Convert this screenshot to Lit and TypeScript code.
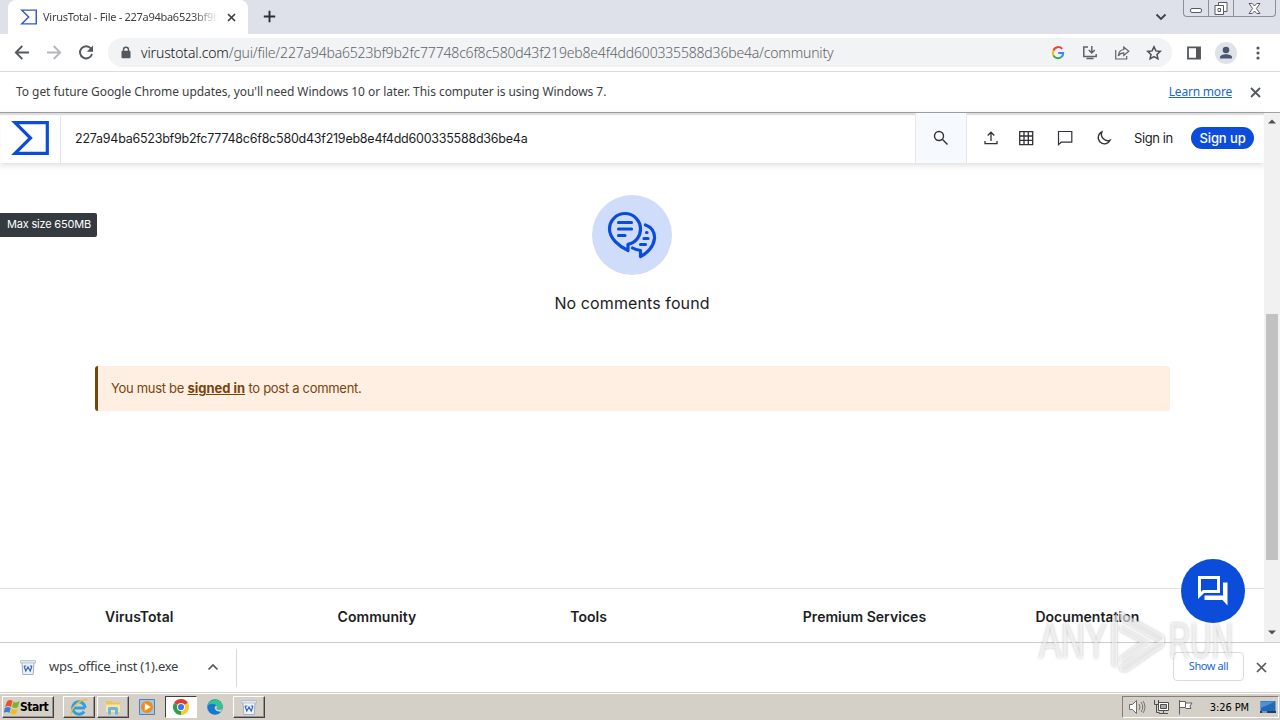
import { LitElement, css, html, svg } from "lit";
import { customElement, property } from "lit/decorators.js";

const HASH = "227a94ba6523bf9b2fc77748c6f8c580d43f219eb8e4f4dd600335588d36be4a";

const sigma = svg`<path fill="none" stroke="currentColor" stroke-width="3.2" stroke-linejoin="miter" d="M4 1.7H36.300V32.300H4L19.500 17Z"/>`;

const wpsIcon = html`
    <svg width="16" height="16" viewBox="0 0 16 16">
        <path d="M2 3.5h12l-.8 12H2.8z" fill="#eef3fa" stroke="#9fb0c6"/>
        <path d="M0.5 1.5h15v2.5h-15z" fill="#dfe6f0" stroke="#a9b5c6" stroke-width=".7"/>
        <path d="M4 7l1.8 5L8 8l2.2 4L12 7M4 7h2.4M12 7h-2.2" fill="none" stroke="#3566c0" stroke-width="1.2"/>
    </svg>`;

@customElement("browser-chrome")
class BrowserChrome extends LitElement {
    static styles = css`
        :host {
            display: block;
            font-family: "Noto Sans", "Open Sans", sans-serif;
            color: #3c4043;
        }
        .strip {
            display: flex;
            height: 34px;
            background: #dee1e9;
        }
        .tab {
            display: flex;
            align-items: center;
            box-sizing: border-box;
            width: 240px;
            height: 34px;
            margin-left: 8px;
            padding: 0 10px 0 12px;
            background: #fff;
            border-radius: 8px 8px 0 0;
        }
        .favicon {
            flex: none;
            color: #2f55d4;
        }
        .title {
            width: 175px;
            margin: -1px 0 0 6px;
            overflow: hidden;
            white-space: nowrap;
            font-size: 11px;
            letter-spacing: -0.28px;
            mask-image: linear-gradient(90deg, #000 150px, transparent 175px);
        }
        .tab-close {
            margin-left: 9px;
        }
        .new-tab {
            margin: 10px 0 0 15px;
        }
        .search-tabs {
            margin: 12px 16px 0 auto;
        }
        .window {
            display: flex;
            box-sizing: border-box;
            width: 93px;
            height: 17px;
            margin-right: 4px;
            border: 1px solid #8b8f96;
            border-top: none;
            border-radius: 0 0 4px 4px;
        }
        .window span {
            display: flex;
            align-items: center;
            justify-content: center;
            width: 25px;
            border-right: 1px solid #8b8f96;
        }
        .window span:last-child {
            width: 42px;
            border: none;
        }
        .toolbar {
            display: flex;
            align-items: center;
            box-sizing: border-box;
            height: 38px;
            padding: 0 13px 0 14px;
            background: #fff;
            border-bottom: 1px solid #d9dbde;
        }
        .nav {
            display: flex;
            gap: 16px;
        }
        .omnibox {
            display: flex;
            align-items: center;
            box-sizing: border-box;
            width: 1064px;
            height: 29px;
            margin-left: 14px;
            padding: 0 10px 0 12px;
            background: #f1f3f4;
            border-radius: 15px;
        }
        .url {
            margin-left: 9px;
            font-size: 14px;
            font-weight: 300;
            white-space: nowrap;
            letter-spacing: -0.18px;
            color: #5f6368;
        }
        .url b {
            font-weight: 350;
            color: #111214;
            letter-spacing: -0.14px;
        }
        .actions {
            display: flex;
            gap: 16px;
            margin-left: auto;
        }
        .side {
            display: flex;
            align-items: center;
            gap: 13px;
            margin-left: 14px;
        }
        .side svg:last-child {
            margin-left: 1px;
        }
        .infobar {
            display: flex;
            align-items: center;
            height: 40px;
            padding: 0 19px 0 16px;
            background: #fff;
            font-size: 12px;
            white-space: nowrap;
        }
        .infobar .message {
            margin-top: -2px;
            letter-spacing: -0.05px;
        }
        .infobar a {
            margin: -2px 18px 0 auto;
            color: #1967d2;
            letter-spacing: -0.2px;
            text-decoration: underline;
        }
    `

    render() {
        return html`
        <div class="strip">
            <div class="tab">
                <svg class="favicon" width="17" height="16" viewBox="0 0 38 34">${sigma}</svg>
                <span class="title">VirusTotal - File - 227a94ba6523bf9b</span>
                <svg class="tab-close" width="9" height="9" viewBox="0 0 9 9"><path d="M1 1l7 7M8 1L1 8" stroke="#3c4043" stroke-width="1.7"/></svg>
            </div>
            <svg class="new-tab" width="13" height="13" viewBox="0 0 13 13"><path d="M6.5 .8v11.4M.8 6.500h11.400" stroke="#2b2e33" stroke-width="1.9"/></svg>
            <svg class="search-tabs" width="12" height="10" viewBox="0 0 12 10"><path d="M1.500 2.500L6 7l4.500-4.500" fill="none" stroke="#3c4043" stroke-width="1.8"/></svg>
            <div class="window">
                <span><svg width="14" height="14" viewBox="0 0 14 14"><rect x="1.500" y="7.500" width="11" height="4" rx="1.500" fill="#fff" stroke="#555a63"/></svg></span>
                <span><svg width="14" height="15" viewBox="0 0 14 15"><path d="M4.500 1.500h8.500v9h-8.500z" fill="#fff" stroke="#555a63"/><path d="M1 4.500h8.500v9H1z" fill="#fff" stroke="#555a63"/><path d="M4 7.500h2.500v3H4z" fill="none" stroke="#555a63"/></svg></span>
                <span><svg width="13" height="13" viewBox="0 0 13 13"><path d="M1 1.500h3.200L6.500 4l2.300-2.500H12L8.400 6.500 12 11.500H8.800L6.500 9l-2.300 2.500H1l3.600-5z" fill="#fff" stroke="#555a63"/></svg></span>
            </div>
        </div>
        <div class="toolbar">
            <div class="nav">
                <svg width="16" height="16" viewBox="0 0 16 16"><path d="M15 7.500H2M8.300 1L1.800 7.500l6.500 6.500" fill="none" stroke="#54585d" stroke-width="1.800"/></svg>
                <svg width="16" height="16" viewBox="0 0 16 16"><path d="M1 7.500h13M7.700 1L14.200 7.500l-6.500 6.500" fill="none" stroke="#b4b6b9" stroke-width="1.800"/></svg>
                <svg width="16" height="16" viewBox="0 0 16 16"><path d="M12.900 3.500A6.100 6.100 0 1 0 14 9" fill="none" stroke="#54585d" stroke-width="1.900"/><path d="M15 .5v6.200H8.800z" fill="#54585d"/></svg>
            </div>
            <div class="omnibox">
                <svg width="12" height="14" viewBox="0 0 12 14"><rect x="1.500" y="4.800" width="9" height="7.400" rx="1" fill="#54585d"/><path d="M3.500 5.200V3.800a2.500 2.500 0 0 1 5 0v1.400" fill="none" stroke="#54585d" stroke-width="1.400"/></svg>
                <span class="url"><b>virustotal.com</b>/gui/file/${HASH}/community</span>
                <div class="actions">
                    <svg width="16" height="16" viewBox="0 0 16 16">
                        <path d="M12.200 3.900A5.200 5.200 0 0 0 3.400 5.600" fill="none" stroke="#ea4335" stroke-width="2"/>
                        <path d="M3.400 5.600a5.200 5.200 0 0 0 0 4.800" fill="none" stroke="#fbbc05" stroke-width="2"/>
                        <path d="M3.400 10.400a5.200 5.200 0 0 0 8 1.600" fill="none" stroke="#34a853" stroke-width="2"/>
                        <path d="M11.400 12A5.200 5.200 0 0 0 13.200 8H8.200" fill="none" stroke="#4285f4" stroke-width="2"/>
                    </svg>
                    <svg width="16" height="16" viewBox="0 0 16 16" fill="none" stroke="#5f6368" stroke-width="1.500"><path d="M6 2H1.800v9.500h12.400V9M9.800 1v6.500M6.800 5l3 3 3-3M4.500 13.500h7"/></svg>
                    <svg width="16" height="16" viewBox="0 0 16 16" fill="none" stroke="#5f6368" stroke-width="1.200"><path d="M1.700 5v9h11v-3M9.800 2v2.500C6.300 5 4.600 7.200 4.300 10.800c1.300-2 3-3 5.500-3v2.700l5-4.300z"/></svg>
                    <svg width="16" height="16" viewBox="0 0 16 16" fill="none" stroke="#4b4f54" stroke-width="1.500"><path d="M8 1.800l1.900 4.100 4.400.5-3.300 3 .9 4.400L8 11.600l-3.900 2.200.9-4.400-3.300-3 4.400-.5z"/></svg>
                </div>
            </div>
            <div class="side">
                <svg width="16" height="16" viewBox="0 0 16 16"><path d="M2 2.300h12v11.400H2z" fill="none" stroke="#54585d" stroke-width="1.800"/><path d="M10 2h4.500v12H10z" fill="#54585d"/></svg>
                <svg width="22" height="22" viewBox="0 0 22 22"><circle cx="11" cy="11" r="11" fill="#dfe2e8"/><circle cx="11" cy="8" r="3.300" fill="#4a5672"/><path d="M5 16.500v-1.300c0-4 12-4 12 0v1.300z" fill="#4a5672"/></svg>
                <svg width="16" height="16" viewBox="0 0 16 16" fill="#54585d"><circle cx="7" cy="3" r="1.600"/><circle cx="7" cy="8" r="1.600"/><circle cx="7" cy="13" r="1.600"/></svg>
            </div>
        </div>
        <div class="infobar">
            <span class="message">To get future Google Chrome updates, you'll need Windows 10 or later. This computer is using Windows 7.</span>
            <a>Learn more</a>
            <svg width="11" height="11" viewBox="0 0 11 11"><path d="M1 1l9 9M10 1l-9 9" stroke="#54585d" stroke-width="1.800"/></svg>
        </div>
        `
    }
}

@customElement("vt-page")
class VtPage extends LitElement {
    static styles = css`
        :host {
            display: flex;
            position: relative;
            height: 530px;
            box-sizing: border-box;
            border-top: 1px solid #a2a2a4;
            font-family: Inter, Roboto, sans-serif;
            color: #1c1d1f;
            background: #fff;
        }
        .content {
            display: flex;
            flex-direction: column;
            width: 1264px;
        }
        header {
            display: flex;
            align-items: stretch;
            height: 50px;
            box-shadow: inset 0 2px 1px #dcdcde, 0 2px 6px rgba(0, 0, 0, 0.14);
        }
        .logo {
            display: flex;
            align-items: center;
            box-sizing: border-box;
            width: 61px;
            padding-left: 11px;
            border-right: 1px solid #e3e6ee;
            color: #0b4dda;
        }
        .query {
            display: flex;
            align-items: center;
            width: 840px;
            padding-left: 14px;
            font-size: 12.5px;
            letter-spacing: -0.24px;
        }
        .search {
            display: flex;
            align-items: center;
            justify-content: center;
            box-sizing: border-box;
            width: 52px;
            background: #f6f9fd;
            border: 1px solid #e3e6ee;
            border-width: 0 1px;
        }
        .menu {
            display: flex;
            align-items: center;
            flex: 1;
            padding: 0 10px 0 16px;
            font-size: 13px;
        }
        .menu svg {
            margin-right: 19px;
        }
        .menu .wide {
            margin-right: 22px;
        }
        .sign-in {
            margin-left: 3px;
            letter-spacing: -0.4px;
        }
        .sign-up {
            width: 63px;
            margin-left: auto;
            line-height: 22px;
            border-radius: 11px;
            text-align: center;
            color: #fff;
            background: #0b4dda;
            font-weight: 500;
            letter-spacing: -0.1px;
        }
        .tooltip {
            position: absolute;
            left: 0;
            top: 100px;
            width: 97px;
            box-sizing: border-box;
            padding-left: 7px;
            line-height: 23px;
            height: 24px;
            border-radius: 0 2px 2px 0;
            color: #fff;
            background: #343a40;
            font-size: 11px;
            letter-spacing: -0.2px;
            white-space: nowrap;
        }
        .empty {
            display: flex;
            flex-direction: column;
            align-items: center;
            margin-top: 32px;
        }
        .empty p {
            margin: 16px 0 0;
            font-size: 16px;
            line-height: 24px;
            letter-spacing: 0.1px;
        }
        .alert {
            box-sizing: border-box;
            width: 1075px;
            margin: 51px 0 0 95px;
            padding-left: 13px;
            line-height: 45px;
            border-left: 3px solid #7a430c;
            border-radius: 3px;
            background: #ffefe3;
            color: #7a430c;
            font-size: 13px;
            letter-spacing: -0.3px;
        }
        .alert a {
            font-weight: 700;
            letter-spacing: 0;
            text-decoration: underline;
        }
        footer {
            display: grid;
            grid-template-columns: repeat(5, 232.6px);
            box-sizing: border-box;
            height: 54px;
            margin-top: auto;
            padding-left: 105px;
            border-top: 1px solid #dfe1e5;
            line-height: 56px;
            font-size: 14px;
            font-weight: 600;
            letter-spacing: 0.04px;
        }
        .chat {
            position: absolute;
            left: 1181px;
            top: 446px;
            display: flex;
            align-items: center;
            justify-content: center;
            width: 64px;
            height: 64px;
            border-radius: 50%;
            background: #0b4dda;
        }
        .scrollbar {
            display: flex;
            flex-direction: column;
            align-items: center;
            width: 16px;
            background: #f1f1f1;
            padding: 6px 0 7px;
            box-sizing: border-box;
        }
        .scrollbar svg {
            flex: none;
        }
        .thumb {
            width: 12px;
            height: 246px;
            margin: 190px 0 auto;
            background: #c1c1c1;
        }
    `

    render() {
        return html`
        <div class="content">
            <header>
                <div class="logo"><svg width="38" height="34" viewBox="0 0 38 34">${sigma}</svg></div>
                <div class="query"><span>${HASH}</span></div>
                <div class="search"><svg width="16" height="16" viewBox="0 0 16 16" fill="none" stroke="#303236" stroke-width="1.400"><circle cx="6" cy="6" r="4.500"/><path d="M9.300 9.300l5.200 5.200"/></svg></div>
                <div class="menu">
                    <svg width="16" height="16" viewBox="0 0 16 16" fill="none" stroke="#303236" stroke-width="1.300"><path d="M8 11V2.500M4.700 5.500L8 2.200l3.300 3.300M2 11v2.700h12V11"/></svg>
                    <svg class="wide" width="16" height="16" viewBox="0 0 16 16" fill="none" stroke="#303236" stroke-width="1.300"><path d="M1.700 1.700h13v13h-13zM1.700 6h13M1.700 10.300h13M6 1.700v13M10.300 1.700v13"/></svg>
                    <svg class="wide" width="18" height="18" viewBox="0 0 18 18" fill="none" stroke="#303236" stroke-width="1.200"><path d="M2.500 2.500h13.300v10.700H5.200l-2.700 2.500z"/></svg>
                    <svg width="16" height="16" viewBox="0 0 16 16" fill="none" stroke="#303236" stroke-width="1.300"><path d="M6 1.800a6.300 6.300 0 1 0 8.300 8.300A6.300 6.300 0 0 1 6 1.800z"/></svg>
                    <span class="sign-in">Sign in</span>
                    <span class="sign-up">Sign up</span>
                </div>
            </header>
            <div class="empty">
                <svg width="80" height="80" viewBox="0 0 80 80">
                    <circle cx="40" cy="40" r="40" fill="#cfdcfa"/>
                    <g fill="none" stroke="#0b4dda" stroke-width="3.200" stroke-linejoin="round" stroke-linecap="round">
                        <path d="M36 55.500V49.300C44 48 48.500 41 48.500 34A15.500 15.500 0 0 0 17.500 34C17.500 43 27 51.500 36 55.500z"/>
                        <path d="M53.500 30C59.500 32 63 37 62.500 43.500 61.500 52 55 58.500 48.500 61.500V55.500C45.500 55 42.500 54.200 40.500 53"/>
                        <path d="M26.500 27.500H39.500M26.500 34H39.500M26.500 40.500H33M54.500 37.500h.5M52 43.500h4M48.500 49.500h5"/>
                    </g>
                </svg>
                <p>No comments found</p>
            </div>
            <div class="alert">You must be <a>signed in</a> to post a comment.</div>
            <footer>
                <span>VirusTotal</span>
                <span>Community</span>
                <span>Tools</span>
                <span>Premium Services</span>
                <span>Documentation</span>
            </footer>
        </div>
        <div class="scrollbar">
            <svg width="8" height="5" viewBox="0 0 8 5"><path d="M0 4.500L4 .5l4 4z" fill="#505050"/></svg>
            <div class="thumb"></div>
            <svg width="8" height="5" viewBox="0 0 8 5"><path d="M0 .5l4 4 4-4z" fill="#505050"/></svg>
        </div>
        <div class="tooltip">Max size 650MB</div>
        <div class="chat">
            <svg width="32" height="32" viewBox="0 0 32 32"><path d="M2.500 2.500h19v14h-15l-4 4z" fill="none" stroke="#fff" stroke-width="3"/><path d="M26 7.500h4.500v23l-5-5.500H7.500v-4.500H26z" fill="#fff"/></svg>
        </div>
        `
    }
}

@customElement("download-shelf")
class DownloadShelf extends LitElement {
    static styles = css`
        :host {
            display: flex;
            align-items: center;
            box-sizing: border-box;
            height: 50px;
            padding: 0 13px 0 20px;
            border-top: 1px solid #c9ccd1;
            background: #fff;
            font-family: "Noto Sans", "Open Sans", sans-serif;
            color: #3c4043;
        }
        .item {
            display: flex;
            align-items: center;
            box-sizing: border-box;
            width: 217px;
            height: 38px;
            padding: 0 17px 2px 0;
            border-right: 1px solid #d5d7da;
        }
        .name {
            margin: -2px 0 0 13px;
            font-size: 13px;
            letter-spacing: -0.26px;
            white-space: nowrap;
        }
        .item .caret {
            margin-left: auto;
        }
        .show-all {
            box-sizing: border-box;
            width: 71px;
            height: 29px;
            margin: -2px 12px 0 auto;
            line-height: 26px;
            border: 1px solid #d9dbde;
            border-radius: 4px;
            text-align: center;
            font-size: 11px;
            letter-spacing: -0.4px;
            color: #1967d2;
        }
        .close {
            margin-bottom: 1px;
        }
    `

    render() {
        return html`
        <div class="item">
            ${wpsIcon}
            <span class="name">wps_office_inst (1).exe</span>
            <svg class="caret" width="12" height="8" viewBox="0 0 12 8"><path d="M1.500 6.500L6 2l4.500 4.500" fill="none" stroke="#54585d" stroke-width="1.700"/></svg>
        </div>
        <span class="show-all">Show all</span>
        <svg class="close" width="11" height="11" viewBox="0 0 11 11"><path d="M1 1l9 9M10 1l-9 9" stroke="#54585d" stroke-width="1.700"/></svg>
        `
    }
}

@customElement("task-button")
class TaskButton extends LitElement {
    @property() look = "raised";

    static styles = css`
        .button {
            display: flex;
            align-items: center;
            justify-content: center;
            box-sizing: border-box;
            width: 32px;
            height: 22px;
        }
        .raised {
            border: 1px solid;
            border-color: #fff #404040 #404040 #fff;
            box-shadow: inset -1px -1px #98948c;
        }
        .pressed {
            border: 1px solid;
            border-color: #404040 #fff #fff #404040;
            background: #fdfdfc;
        }
    `

    render() {
        return html`<div class="button ${this.look}"><slot></slot></div>`
    }
}

@customElement("task-bar")
class TaskBar extends LitElement {
    static styles = css`
        :host {
            display: flex;
            align-items: center;
            box-sizing: border-box;
            height: 28px;
            padding: 2px 1px 0 2px;
            background: #d4d0c8;
            box-shadow: inset 0 1px #d4d0c8, inset 0 2px #fff;
            font-family: "DejaVu Sans Condensed", "DejaVu Sans", sans-serif;
            color: #000;
        }
        .start {
            display: flex;
            align-items: center;
            box-sizing: border-box;
            width: 52px;
            height: 22px;
            padding-left: 1px;
            border: 1px solid;
            border-color: #fff #404040 #404040 #fff;
            box-shadow: inset -1px -1px #98948c;
            font-size: 12px;
            font-weight: 700;
            letter-spacing: -0.5px;
        }
        .start svg {
            flex: none;
        }
        .apps {
            display: flex;
            gap: 2px;
            margin-left: 9px;
        }
        .tray {
            display: flex;
            align-items: center;
            box-sizing: border-box;
            width: 157px;
            height: 22px;
            margin-left: auto;
            padding: 0 2px 0 5px;
            gap: 7px;
            border: 1px solid;
            border-color: #808080 #fff #fff #808080;
        }
        .clock {
            margin: 0 4px 0 auto;
            font-size: 11px;
            letter-spacing: -0.1px;
            white-space: nowrap;
        }
    `

    render() {
        return html`
        <div class="start">
            <svg width="16" height="16" viewBox="0 0 16 16"><path d="M3 2.500Q6 0 8.500 2L7 8Q4 6 1 8z" fill="#e8512a"/><path d="M9.500 2.500Q12 4.500 15.500 2L14 8Q11 10 8 8z" fill="#79b52c"/><path d="M.8 9Q4 7 6.800 9L5.500 14Q3 12-.3 14z" fill="#3c7fd6"/><path d="M7.800 9.500Q10.500 11.500 13.800 9.500L12.300 14.500Q9.500 16.500 6.500 14.500z" fill="#f5bb1d"/></svg>
            <span>Start</span>
        </div>
        <div class="apps">
            <task-button>
                <svg width="20" height="20" viewBox="0 0 18 18"><path d="M14.500 9.800A5.600 5.600 0 1 0 13.600 13M4 9.800h10.500" fill="none" stroke="#2f9fe0" stroke-width="2.700"/><path d="M2.500 16C-.5 12 11 .5 16.500 2.500" fill="none" stroke="#ebc23c" stroke-width="1.300"/></svg>
            </task-button>
            <task-button>
                <svg width="18" height="18" viewBox="0 0 18 18"><path d="M2 3h6l1 1.500h7V14H2z" fill="#e9c65b"/><path d="M2 6.500h14V14H2z" fill="#f8e7a4"/><path d="M4 16.500v-5.500q0-2 2-2h6q2 0 2 2v5.500h-3V12H7v4.500z" fill="#6bb5de"/></svg>
            </task-button>
            <task-button look="flat">
                <svg width="16" height="16" viewBox="0 0 16 16"><path d="M.5.500h15v15H.5z" fill="#9ec9ec" stroke="#4d82b8"/><circle cx="8" cy="8" r="6" fill="#f28a16"/><path d="M5.800 4.300v7.400L11.800 8z" fill="#fff"/></svg>
            </task-button>
            <task-button look="pressed">
                <svg width="16" height="16" viewBox="0 0 16 16"><path d="M8 8L1.070 4A8 8 0 0 1 14.930 4z" fill="#e33b2e"/><path d="M8 8L14.930 4A8 8 0 0 1 8 16z" fill="#fcc934"/><path d="M8 8v8A8 8 0 0 1 1.070 4z" fill="#2da04e"/><circle cx="8" cy="8" r="4" fill="#fff"/><circle cx="8" cy="8" r="3.100" fill="#3b78e7"/></svg>
            </task-button>
            <task-button look="flat">
                <svg width="16" height="16" viewBox="0 0 16 16"><circle cx="8" cy="8" r="7.800" fill="#1479cf"/><path d="M.5 7C2-1 14-1.500 15.800 7c.4 3.500-3 4.500-5.300 4C8.500 10.500 10.500 9 9.500 7 8 4 3 4 .5 7z" fill="#35c48d"/><path d="M9.200 6.500c-2.500 1.500-2.500 6 4.800 6.300l1.800-3.500c-1.500 2-6.500 2.300-6-.3.300-1-.1-2-.6-2.500z" fill="#d4d0c8"/></svg>
            </task-button>
            <task-button>${wpsIcon}</task-button>
        </div>
        <div class="tray">
            <svg width="18" height="16" viewBox="0 0 18 16" fill="none" stroke="#6b6b6b"><path d="M1.500 5.500h3l4-4v13l-4-4h-3z" fill="#fff"/><path d="M11 5q2 3 0 6M13 3q3.500 5 0 10M15 2q4 6 0 12" stroke-width=".9"/></svg>
            <svg width="17" height="16" viewBox="0 0 17 16" fill="#fff" stroke="#4f4f4f"><path d="M5.500 3.500h10v8h-10z"/><path d="M7.500 5.500h6v4h-6z" fill="#aaa"/><path d="M6 14.500h9M10.500 12v2"/><path d="M1.500 1v4.500h4V1M3.500 5.500v8h3" fill="none"/></svg>
            <svg width="17" height="16" viewBox="0 0 17 16" fill="#fff" stroke="#606060"><path d="M2.500 1v14.500M2.500 2.500h6v6h-6M8.500 4h6.500l-2 3 1 2.500H8.500"/></svg>
            <span class="clock">3:26 PM</span>
            <svg width="16" height="14" viewBox="0 0 16 14"><path d="M.5 1h15v10H.5z" fill="#2369b5"/><path d="M1 1.500h14L1 8z" fill="#4c92da"/><path d="M0 11h16v2H0z" fill="#1c3f72"/><path d="M2 11.500h5v1H2z" fill="#cfe3f6"/></svg>
        </div>
        `
    }
}

@customElement("app-root")
class AppRoot extends LitElement {
    static styles = css`
        :host {
            display: flex;
            flex-direction: column;
            position: relative;
            width: 1280px;
            height: 720px;
            overflow: hidden;
        }
        .watermark {
            position: absolute;
            left: 1034px;
            top: 606px;
            filter: drop-shadow(0 0 1.5px rgba(0, 0, 0, 0.4));
            font: 50px "Liberation Sans Narrow", "Liberation Sans", sans-serif;
        }
    `

    render() {
        return html`
        <browser-chrome></browser-chrome>
        <vt-page></vt-page>
        <download-shelf></download-shelf>
        <task-bar></task-bar>
        <svg class="watermark" width="206" height="70" viewBox="0 0 206 70" fill="#fff" fill-opacity=".6">
            <text x="5" y="52" textLength="68" lengthAdjust="spacingAndGlyphs">ANY</text>
            <text x="135" y="52" textLength="64" lengthAdjust="spacingAndGlyphs">RUN</text>
            <path d="M78 10l5-2v54l-5-3z"/>
            <path d="M86 5l44 25v6H124L86 14z"/>
            <path d="M86 19l30 17-24 17-6 3v-5l20-15-20-11z"/>
            <path d="M86 60l44-28v8L92 66l-6-1z"/>
        </svg>
        `
    }
}
